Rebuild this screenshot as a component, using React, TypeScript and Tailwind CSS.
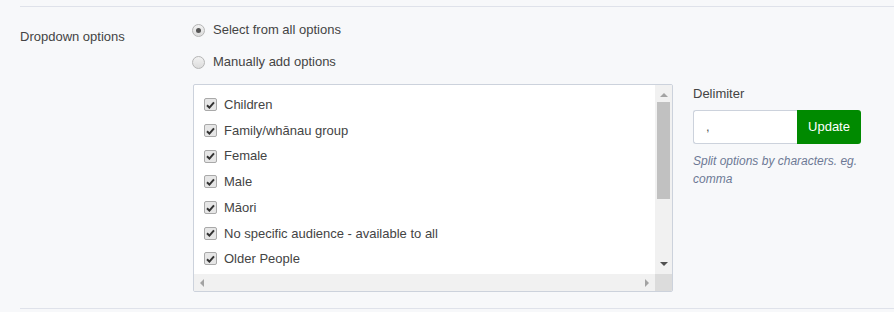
import React from "react";

const items = [
  "Children",
  "Family/whānau group",
  "Female",
  "Male",
  "Māori",
  "No specific audience - available to all",
  "Older People",
  "People with disabilities",
];

function Check() {
  return (
    <span className="flex h-[13px] w-[13px] shrink-0 items-center justify-center rounded-[2px] border border-[#a9a9a9] bg-[#e6e6e6]">
      <svg width="9" height="8" viewBox="0 0 9 8">
        <path d="M1 4.2 L3.4 6.6 L8 1.4" fill="none" stroke="#333" strokeWidth="2" />
      </svg>
    </span>
  );
}

function Radio({ on }: { on?: boolean }) {
  return (
    <span className="flex h-[13px] w-[13px] shrink-0 items-center justify-center rounded-full border border-[#b5b5b5] bg-gradient-to-b from-[#f2f2f2] to-[#dcdcdc]">
      {on && <span className="h-[5px] w-[5px] rounded-full bg-[#555]" />}
    </span>
  );
}

export default function App() {
  return (
    <div
      className="h-[312px] w-[894px] overflow-hidden bg-[#f7f8fa] text-[13px] text-[#3a3a3a]"
      style={{ fontFamily: '"Liberation Sans", Arial, sans-serif' }}
    >
      <div className="ml-5 mt-[6px] border-t border-[#dfe2ea]">
        <div className="flex">
          <div className="w-[172px] pt-[20px] leading-5 text-[#444]">Dropdown options</div>
          <div className="flex flex-col pt-[13px]">
            <label className="flex h-5 items-center gap-[8px] leading-5">
              <Radio on />
              <span className="text-[#444]">Select from all options</span>
            </label>
            <label className="mt-3 flex h-5 items-center gap-[8px] leading-5">
              <Radio />
              <span className="text-[#444]">Manually add options</span>
            </label>
            <div className="mt-3 flex gap-5">
              <div className="relative ml-px h-[208px] w-[480px] overflow-hidden rounded-[2px] border border-[#ccd2dc] bg-white">
                <div className="flex flex-col pl-[10px] pt-[7px]">
                  {items.map((t) => (
                    <div key={t} className="flex h-[25.7px] items-center gap-[7px] whitespace-nowrap">
                      <Check />
                      <span className="text-[#444]">{t}</span>
                    </div>
                  ))}
                </div>
                <div className="absolute right-0 top-0 flex h-[189px] w-[17px] flex-col items-center bg-[#f1f1f1]">
                  <svg className="mt-[7px]" width="8" height="5" viewBox="0 0 8 5">
                    <path d="M0 5 L4 1 L8 5 Z" fill="#a3a3a3" />
                  </svg>
                  <div className="mt-[5px] h-[97px] w-[13px] bg-[#c1c1c1]" />
                  <svg className="mt-auto mb-[7px]" width="8" height="5" viewBox="0 0 8 5">
                    <path d="M0 0 L8 0 L4 4 Z" fill="#505050" />
                  </svg>
                </div>
                <div className="absolute bottom-0 left-0 flex h-[17px] w-full">
                  <div className="flex flex-1 items-center justify-between bg-[#f1f1f1] px-[5px]">
                    <svg width="5" height="8" viewBox="0 0 5 8">
                      <path d="M5 0 L5 8 L1 4 Z" fill="#a3a3a3" />
                    </svg>
                    <svg width="5" height="8" viewBox="0 0 5 8">
                      <path d="M0 0 L0 8 L4 4 Z" fill="#a3a3a3" />
                    </svg>
                  </div>
                  <div className="w-[17px] bg-[#dcdcdc]" />
                </div>
              </div>
              <div className="flex w-[168px] flex-col">
                <div className="leading-5 text-[#444]">Delimiter</div>
                <div className="mt-[6px] flex h-[34px]">
                  <div className="flex w-[104px] items-center rounded-l-[3px] border border-r-0 border-[#ccd2dc] bg-white pl-[12px] text-[#555]">
                    ,
                  </div>
                  <button className="w-[64px] rounded-r-[3px] bg-[#008a00] text-[13px] text-white">
                    Update
                  </button>
                </div>
                <div className="mt-2 text-[12px] italic leading-[18px] text-[#6d7895]">
                  Split options by characters. eg. comma
                </div>
              </div>
            </div>
          </div>
        </div>
        <div className="mt-4 border-t border-[#dfe2ea]" />
      </div>
    </div>
  );
}
